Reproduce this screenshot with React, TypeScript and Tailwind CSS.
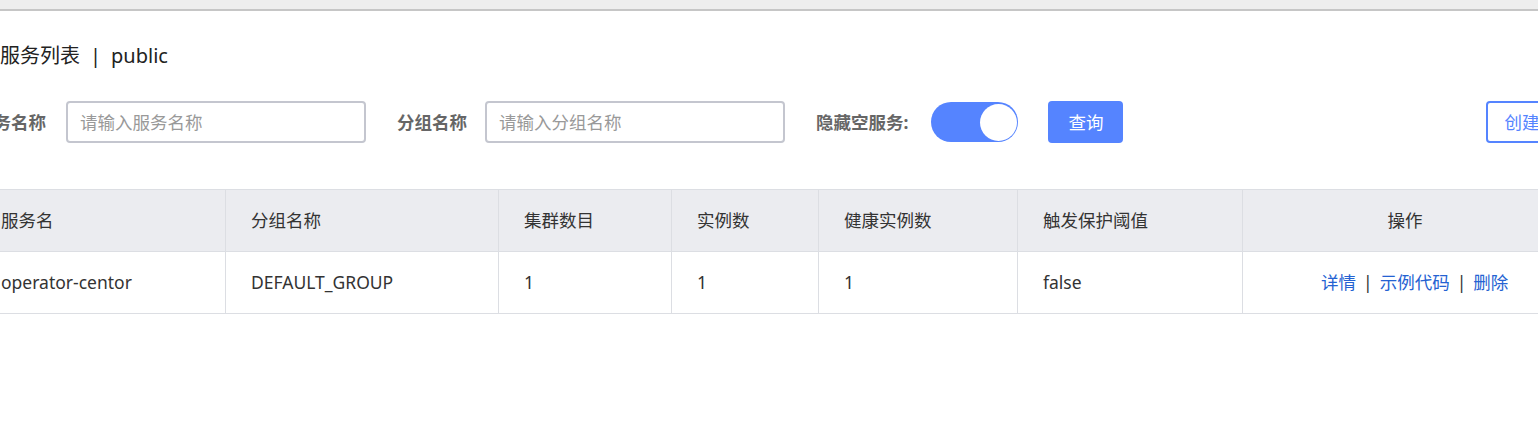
import React from "react";

const font = { fontFamily: '"Noto Sans", "Noto Sans CJK SC", sans-serif' };

export default function App() {
  const cols = "grid grid-cols-[250px_273px_173px_147px_199px_225px_352px]";
  return (
    <div className="w-[1538px] h-[424px] overflow-hidden bg-white text-[#333]" style={font}>
      <div className="h-[11px] bg-[#eeeeee] border-b-2 border-[#c6c6c6]" />
      <div className="ml-[-24px] w-[1640px]">
        <div className="mt-[30px] h-[30px] pl-[24px] flex items-center text-[20px] text-[#222]">
          <span>服务列表</span>
          <span className="mx-[10px]">|</span>
          <span>public</span>
        </div>
        <div className="mt-[30px] h-[42px] flex items-center">
          <span className="text-[17.5px] font-bold text-[#666] w-[72px]">服务名称</span>
          <div className="ml-[18px] w-[300px] h-[42px] border-2 border-[#c4c6cf] rounded-[4px] flex items-center px-[12px] text-[17.5px] text-[#999]">
            请输入服务名称
          </div>
          <span className="ml-[31px] text-[17.5px] font-bold text-[#666]">分组名称</span>
          <div className="ml-[18px] w-[300px] h-[42px] border-2 border-[#c4c6cf] rounded-[4px] flex items-center px-[12px] text-[17.5px] text-[#999]">
            请输入分组名称
          </div>
          <span className="ml-[31px] text-[17.5px] font-bold text-[#666]">隐藏空服务:</span>
          <div className="ml-[23px] w-[87px] h-[40px] rounded-full bg-[#5584ff] flex items-center justify-end pr-[1px]">
            <div className="w-[37px] h-[37px] rounded-full bg-white" />
          </div>
          <button className="ml-[30px] w-[75px] h-[42px] rounded-[4px] bg-[#5584ff] text-white text-[17.5px]">
            查询
          </button>
          <button className="ml-[363px] w-[120px] h-[42px] rounded-[4px] border-2 border-[#5584ff] text-[#5584ff] text-[17.5px] text-left pl-[16px]">
            创建服务
          </button>
        </div>
        <div className="mt-[46px] border-t border-[#dcdee3] text-[17.5px]">
          <div className={`${cols} h-[62px] bg-[#ebecf0] border-b border-[#dcdee3]`}>
            {["服务名", "分组名称", "集群数目", "实例数", "健康实例数", "触发保护阈值"].map((t) => (
              <div key={t} className="flex items-center pl-[25px] border-r border-[#dcdee3]">{t}</div>
            ))}
            <div className="flex items-center justify-center">
              <span className="ml-[-28px]">操作</span>
            </div>
          </div>
          <div className={`${cols} h-[62px] bg-white border-b border-[#dcdee3]`}>
            {["operator-centor", "DEFAULT_GROUP", "1", "1", "1", "false"].map((t, i) => (
              <div key={i} className="flex items-center pl-[25px] border-r border-[#dcdee3]">{t}</div>
            ))}
            <div className="flex items-center pl-[78px] text-[#2462d2]">
              <span>详情</span>
              <span className="mx-[7px] text-[#333]">|</span>
              <span>示例代码</span>
              <span className="mx-[7px] text-[#333]">|</span>
              <span>删除</span>
            </div>
          </div>
        </div>
      </div>
    </div>
  );
}
